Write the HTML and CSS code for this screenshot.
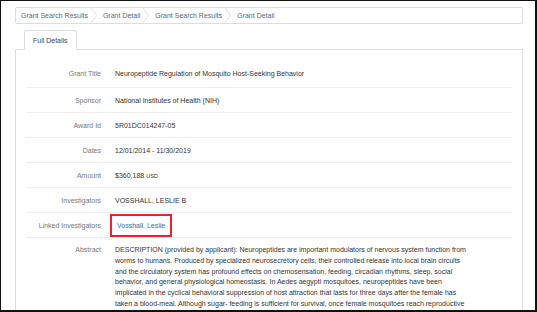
FILE: index.html
```html
<!DOCTYPE html>
<html lang="en">
<head>
  <meta charset="UTF-8" />
  <title>Grant Detail</title>
  <link rel="stylesheet" href="styles.css">
</head>
<body>
  <div class="frame">

    <div class="crumbs">
      <span class="crumb">Grant Search Results</span>
      <svg class="sep" viewBox="0 0 6 17" preserveAspectRatio="none"><polyline points="0,0 5.5,8.5 0,17" /></svg>
      <span class="crumb">Grant Detail</span>
      <svg class="sep" viewBox="0 0 6 17" preserveAspectRatio="none"><polyline points="0,0 5.5,8.5 0,17" /></svg>
      <span class="crumb">Grant Search Results</span>
      <svg class="sep" viewBox="0 0 6 17" preserveAspectRatio="none"><polyline points="0,0 5.5,8.5 0,17" /></svg>
      <span class="crumb">Grant Detail</span>
    </div>

    <div class="tabs">
      <div class="tab">Full Details</div>
    </div>

    <div class="panel">
      <div class="row first">
        <div class="label">Grant Title</div>
        <div class="value">Neuropeptide Regulation of Mosquito Host-Seeking Behavior</div>
      </div>
      <div class="row">
        <div class="label">Sponsor</div>
        <div class="value">National Institutes of Health (NIH)</div>
      </div>
      <div class="row">
        <div class="label">Award Id</div>
        <div class="value">5R01DC014247-05</div>
      </div>
      <div class="row">
        <div class="label">Dates</div>
        <div class="value">12/01/2014 - 11/30/2019</div>
      </div>
      <div class="row">
        <div class="label">Amount</div>
        <div class="value">$360,188 <span class="cur">USD</span></div>
      </div>
      <div class="row">
        <div class="label">Investigators</div>
        <div class="value">VOSSHALL, LESLIE B</div>
      </div>
      <div class="row">
        <div class="label">Linked Investigators</div>
        <div class="value"><a href="#" class="linked">Vosshall, Leslie</a></div>
      </div>
      <div class="row abstract">
        <div class="label">Abstract</div>
        <div class="value">DESCRIPTION (provided by applicant): Neuropeptides are important modulators of nervous system function from<br>
          worms to humans. Produced by specialized neurosecretory cells, their controlled release into local brain circuits<br>
          and the circulatory system has profound effects on chemosensation, feeding, circadian rhythms, sleep, social<br>
          behavior, and general physiological homeostasis. In Aedes aegypti mosquitoes, neuropeptides have been<br>
          implicated in the cyclical behavioral suppression of host attraction that lasts for three days after the female has<br>
          taken a blood-meal. Although sugar- feeding is sufficient for survival, once female mosquitoes reach reproductive</div>
      </div>
    </div>

  </div>
</body>
</html>
```

FILE: styles.css
```css
* { box-sizing: border-box; margin: 0; padding: 0; }

body {
  font-family: "Liberation Sans", Arial, sans-serif;
  font-size: 7px;
  color: #333;
  background: #fff;
}

.frame {
  width: 537px;
  height: 312px;
  overflow: hidden;
  border: 1px solid #111;
  border-right-width: 2px;
  border-bottom-width: 2px;
  padding: 6px 12px 0 14px;
}

.crumbs {
  display: flex;
  align-items: center;
  height: 17px;
  border: 1px solid #ddd;
  border-radius: 2px;
  background: #fff;
  color: #666;
}

.crumb {
  padding-right: 3px;
}

.crumb:first-child {
  padding-left: 5px;
}

.sep {
  width: 6px;
  height: 15px;
  margin-right: 6px;
}

.sep polyline {
  fill: none;
  stroke: #ddd;
  stroke-width: 1;
}

.tabs {
  margin-top: 6px;
  padding-left: 9px;
  display: flex;
}

.tab {
  height: 20px;
  line-height: 19px;
  padding: 0 8px;
  border: 1px solid #ddd;
  border-bottom-color: #fff;
  border-radius: 3px 3px 0 0;
  margin-bottom: -1px;
  background: #fff;
  color: #444;
  position: relative;
}

.panel {
  border: 1px solid #ddd;
  border-bottom: none;
  padding: 10px 10px 0 10px;
  height: 300px;
}

.row {
  display: flex;
  align-items: center;
  min-height: 25px;
  border-bottom: 1px solid #eee;
}

.row.first {
  min-height: 28px;
}

.label {
  width: 75px;
  flex: none;
  text-align: right;
  color: #777;
}

.value {
  margin-left: 14px;
  color: #333;
}

.cur {
  font-size: 5.5px;
}

.linked {
  color: #2b72a8;
  text-decoration: none;
  display: inline-block;
  padding: 6px 5px;
  margin-left: -5px;
  border: 2px solid #e8232f;
}

.row.abstract {
  align-items: flex-start;
  border-bottom: none;
  padding-top: 8px;
}

.abstract .value {
  line-height: 10.8px;
  white-space: nowrap;
  margin-top: -1px;
}
```
